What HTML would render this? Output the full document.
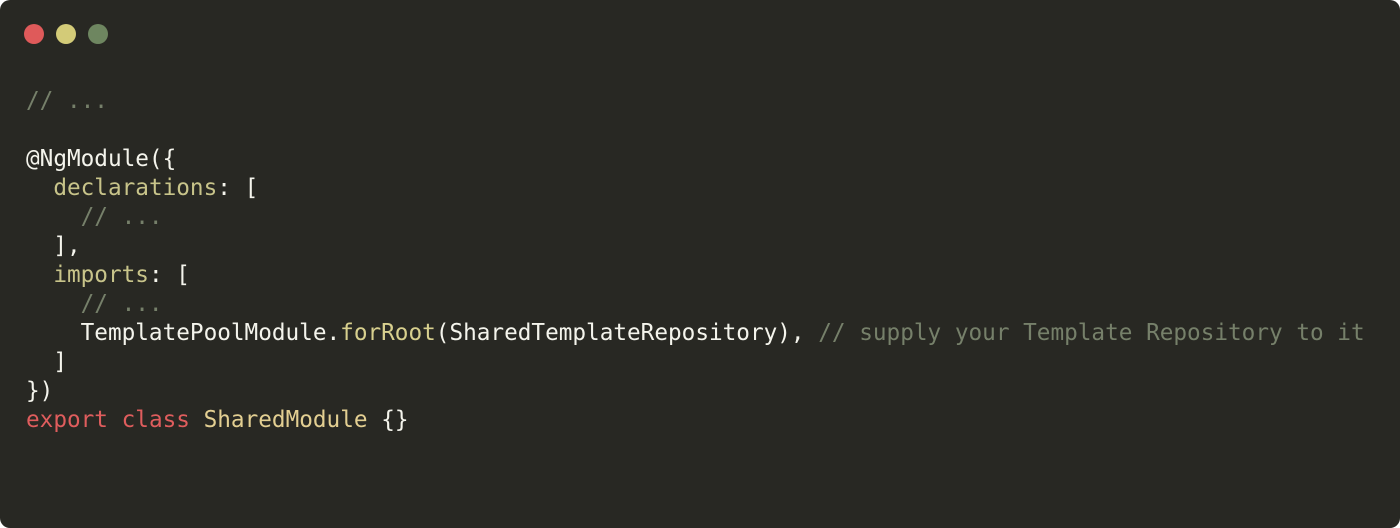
<!DOCTYPE html>
<html><head><meta charset="utf-8"><style>
html,body{margin:0;padding:0;background:#fff;}
.win{position:absolute;left:0;top:0;width:1400px;height:528px;background:#282823;border-radius:10px;overflow:hidden;}
.dot{position:absolute;top:24px;width:20px;height:20px;border-radius:50%;}
pre{position:absolute;left:26px;top:87px;margin:0;font-family:"DejaVu Sans Mono","Liberation Mono",monospace;font-size:22.7px;line-height:29px;color:#f4f4ec;}
.c{color:#76806a}.k{color:#c8c48a}.r{color:#df5d5d}.y{color:#e3cf92}.f{color:#d8d08e}
</style></head><body><div class="win">
<div class="dot" style="left:24px;background:#df5a5a"></div>
<div class="dot" style="left:56px;background:#d3cb78"></div>
<div class="dot" style="left:88px;background:#6e8660"></div>
<pre><span class="c">// ...</span>

@NgModule({
  <span class="k">declarations</span>: [
    <span class="c">// ...</span>
  ],
  <span class="k">imports</span>: [
    <span class="c">// ...</span>
    TemplatePoolModule.<span class="f">forRoot</span>(SharedTemplateRepository), <span class="c">// supply your Template Repository to it</span>
  ]
})
<span class="r">export</span> <span class="r">class</span> <span class="y">SharedModule</span> {}</pre>
</div></body></html>
